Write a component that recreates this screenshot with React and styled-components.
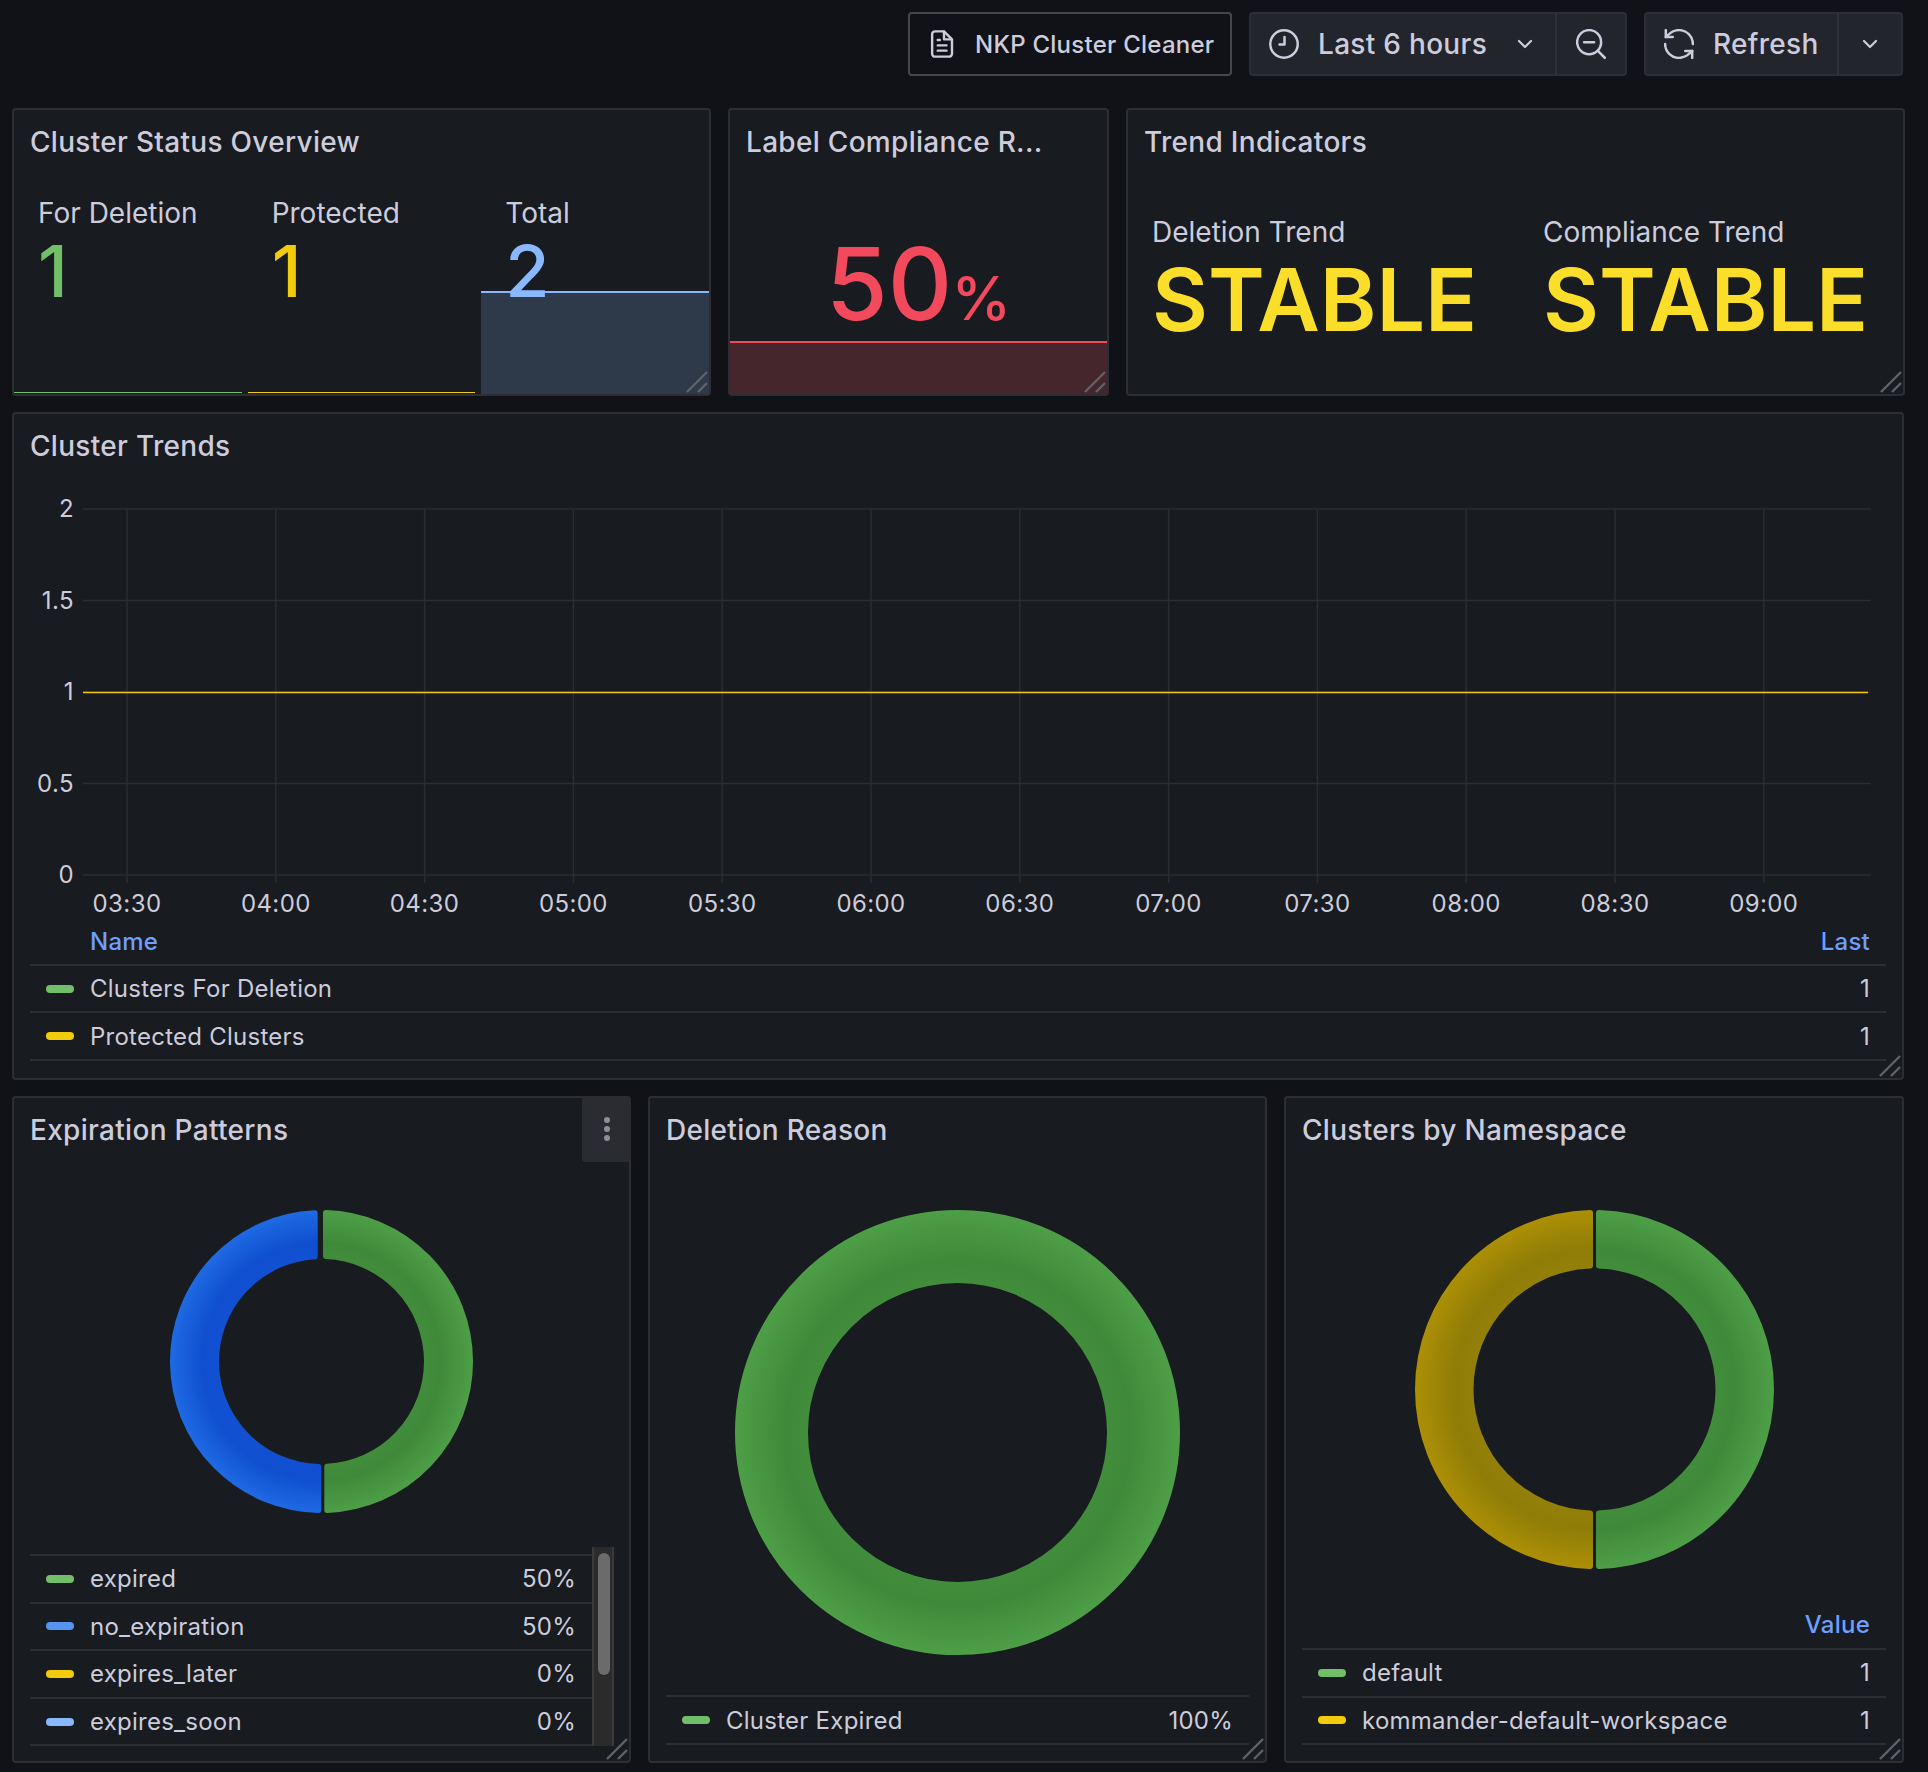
import React from "react";
import styled, { createGlobalStyle } from "styled-components";

const GlobalStyle = createGlobalStyle`
  html, body { margin: 0; padding: 0; background: #111217; }
  body { font-family: Inter, "Liberation Sans", sans-serif; color: #ccccdc; }
  * { box-sizing: border-box; }
`;

const Page = styled.div`
  width: 1928px;
  height: 1772px;
  padding: 12px 0 0 12px;
  overflow: hidden;
  background: #111217;
`;
const Toolbar = styled.header`
  display: flex;
  justify-content: flex-end;
  gap: 17px;
  height: 64px;
  margin-bottom: 32px;
  padding-right: 25px;
`;
const OutlineButton = styled.div`
  display: flex;
  align-items: center;
  width: 324px;
  gap: 17px;
  padding-left: 16px;
  border: 2px solid #45474d;
  border-radius: 4px;
  font-size: 24px;
  font-weight: 500;
  letter-spacing: 0.25px;
  color: #ccccdc;
`;
const ButtonGroup = styled.div`
  display: flex;
  align-items: stretch;
  height: 64px;
  background: #22252b;
  border: 2px solid #2c2e33;
  border-radius: 4px;
  font-size: 28px;
  font-weight: 500;
  letter-spacing: 0.3px;
`;
const GroupPart = styled.div`
  display: flex;
  align-items: center;
  justify-content: ${(p) => (p.$center ? "center" : "flex-start")};
  width: ${(p) => p.$w}px;
  padding-left: ${(p) => p.$pl || 0}px;
  gap: ${(p) => p.$gap || 0}px;
  & + & { border-left: 2px solid #2f3136; }
`;
const Chevron = styled.svg`
  margin-left: ${(p) => p.$ml || 0}px;
`;
const Rows = styled.div`
  display: grid;
  gap: 16px;
`;
const TopRow = styled.div`
  display: grid;
  grid-template-columns: 699px 381px 779px;
  gap: 17px;
  height: 288px;
`;
const BottomRow = styled.div`
  display: grid;
  grid-template-columns: 619px 619px 620px;
  gap: 17px;
  height: 667px;
`;
const Panel = styled.section`
  position: relative;
  display: flex;
  flex-direction: column;
  width: ${(p) => (p.$w ? p.$w + "px" : "auto")};
  height: ${(p) => (p.$h ? p.$h + "px" : "auto")};
  background: #181b1f;
  border: 2px solid #2c2e33;
  border-radius: 4px;
`;
const PanelTitle = styled.h2`
  flex: none;
  height: 62px;
  margin: 0;
  padding: 7px 16px 0;
  line-height: 50px;
  font-size: 28px;
  font-weight: 500;
  letter-spacing: 0.3px;
  color: #ccccdc;
  white-space: nowrap;
`;
const Resize = styled.svg`
  position: absolute;
  right: 1px;
  bottom: 1px;
`;
const Stats = styled.div`
  flex: 1;
  display: grid;
  grid-template-columns: repeat(3, 1fr);
  gap: 6px;
`;
const StatTile = styled.div`
  position: relative;
  padding: 23px 0 0 24px;
`;
const StatLabel = styled.div`
  font-size: 28px;
  line-height: 36px;
  color: #ccccdc;
`;
const StatValue = styled.div`
  position: relative;
  z-index: 1;
  font-size: 72px;
  font-weight: 500;
  line-height: 72px;
  margin-top: 4px;
  color: ${(p) => p.$color};
`;
const Spark = styled.div`
  position: absolute;
  left: 0;
  right: 0;
  bottom: 0;
  height: ${(p) => p.$h}px;
  background: ${(p) => p.$fill};
  border-top: ${(p) => p.$bw || 2}px solid ${(p) => p.$line};
`;
const GaugeBody = styled.div`
  position: relative;
  flex: 1;
  display: flex;
  justify-content: center;
  align-items: baseline;
  padding-top: 62px;
  color: #f2495c;
  font-weight: 500;
`;
const BigNumber = styled.span`
  font-size: 100px;
  line-height: 100px;
`;
const BigUnit = styled.span`
  font-size: 60px;
  line-height: 60px;
  margin-left: -1px;
`;
const TrendBody = styled.div`
  flex: 1;
  display: grid;
  grid-template-columns: 391px 1fr;
  padding: 42px 0 0 24px;
`;
const TrendItem = styled.div``;
const TrendLabel = styled.div`
  font-size: 28px;
  line-height: 36px;
`;
const TrendValue = styled.div`
  font-size: 86px;
  font-weight: 600;
  line-height: 88px;
  color: #fade2a;
  margin-top: 6px;
`;
const ChartSvg = styled.svg`
  display: block;
  flex: none;
  margin-top: 3px;
`;
const Axis = styled.text`
  font-family: Inter, "Liberation Sans", sans-serif;
  font-size: 24px;
  letter-spacing: 0.4px;
  fill: #ccccdc;
`;
const Legend = styled.div`
  margin: 0 16px;
  font-size: 24px;
  letter-spacing: 0.25px;
`;
const LegendRow = styled.div`
  display: flex;
  align-items: center;
  height: ${(p) => p.$h || 47.4}px;
  padding: 0 16px 0 16px;
  border-bottom: 2px solid #2c2e33;
`;
const HeaderRow = styled(LegendRow)`
  color: #6e9fff;
  font-weight: 500;
  padding-left: 60px;
  padding-bottom: 3px;
`;
const TopRule = styled.div`
  height: 2px;
  background: #2c2e33;
`;
const BottomSpacer = styled.div`
  flex: none;
  height: 16px;
`;
const Swatch = styled.span`
  flex: none;
  width: 28px;
  height: 8px;
  border-radius: 4px;
  background: ${(p) => p.$color};
  margin-right: 16px;
`;
const RowName = styled.span`
  flex: 1;
  white-space: nowrap;
`;
const DonutArea = styled.div`
  flex: 1;
  min-height: 0;
  display: flex;
  align-items: center;
  justify-content: center;
  padding-top: ${(p) => p.$top}px;
`;
const LegendScroll = styled.div`
  flex: none;
  display: flex;
  height: 199px;
  margin: 0 0 15px 16px;
  width: 584px;
  overflow: hidden;
  font-size: 24px;
  letter-spacing: 0.25px;
`;
const LegendList = styled.div`
  flex: 1;
  padding-top: 7px;
`;
const ScrollTrack = styled.div`
  flex: none;
  width: 22px;
  height: 199px;
  padding: 6px 4px 0 4px;
  background: #2b2b2b;
  border-left: 2px solid #3a3a3a;
  border-right: 2px solid #3a3a3a;
`;
const ScrollThumb = styled.div`
  width: 12px;
  height: 122px;
  border-radius: 6px;
  background: #6b6b6b;
`;
const MenuButton = styled.div`
  position: absolute;
  top: -2px;
  right: -2px;
  width: 49px;
  height: 66px;
  display: flex;
  flex-direction: column;
  align-items: center;
  justify-content: center;
  gap: 3.4px;
  background: #2a2c31;
  border-radius: 4px;
`;
const Dot = styled.i`
  width: 6px;
  height: 6px;
  border-radius: 50%;
  background: #8e8f96;
`;
const ListRow = styled(LegendRow)`
  height: 47.6px;
`;
const IconSvg = styled.svg`
  flex: none;
  display: block;
  fill: none;
  stroke: #ccccdc;
  stroke-width: ${(p) => p.$sw || 2};
  stroke-linecap: round;
  stroke-linejoin: round;
`;

const FileIcon = () => (
  <IconSvg $sw={1.8} width="32" height="32" viewBox="0 0 24 24">
    <path d="M7 2.5h6.5l6 6V19.3a2.2 2.2 0 0 1-2.2 2.2H6.8a2.2 2.2 0 0 1-2.2-2.2V4.7A2.2 2.2 0 0 1 6.8 2.5Z" />
    <path d="M13.5 2.8V8.5h5.6M8.8 9h1.6M8.8 13h6.6M8.8 17h6.6" />
  </IconSvg>
);
const ClockIcon = () => (
  <IconSvg width="30" height="30" viewBox="0 0 24 24">
    <circle cx="12" cy="12" r="11" />
    <path d="M12.4 6.4v6H8.4" />
  </IconSvg>
);
const ZoomIcon = () => (
  <IconSvg width="30" height="30" viewBox="0 0 24 24">
    <circle cx="10.5" cy="10.5" r="9.6" />
    <path d="M6.5 10.5h8M17.5 17.5 23 23" />
  </IconSvg>
);
const SyncIcon = () => (
  <IconSvg $sw={1.8} width="30" height="30" viewBox="1.2 1.2 21.6 21.6">
    <path d="M22 12A10 10 0 0 0 12 2 10.8 10.8 0 0 0 4.6 5L2.5 7" />
    <path d="M2.5 2v5h5" />
    <path d="M2 12a10 10 0 0 0 10 10 10.8 10.8 0 0 0 7.4-3l2.1-2" />
    <path d="M16.5 17h5v5" />
  </IconSvg>
);
const Down = ({ ml }) => (
  <Chevron $ml={ml} width="16" height="10" viewBox="0 0 16 10" fill="none">
    <path d="M2 2l6 6 6-6" stroke="#ccccdc" strokeWidth="2.2" strokeLinecap="round" strokeLinejoin="round" />
  </Chevron>
);
const Grip = () => (
  <Resize width="22" height="22" viewBox="0 0 22 22">
    <path d="M1 21 21 1M12 21l9-9" stroke="#606268" strokeWidth="2.4" fill="none" />
  </Resize>
);

const TIMES = ["03:30","04:00","04:30","05:00","05:30","06:00","06:30","07:00","07:30","08:00","08:30","09:00"];
const YS = [["2",510],["1.5",601.5],["1",693],["0.5",784.5],["0",876]];

const TrendChart = () => (
  <ChartSvg width="1888" height="442" viewBox="14 480 1888 442">
    {YS.map(([l, y]) => (
      <g key={l}>
        <line x1="83" x2="1871" y1={y} y2={y} stroke="#2a2d31" strokeWidth="1.5" />
        <Axis x="74" y={y + 8} textAnchor="end">{l}</Axis>
      </g>
    ))}
    {TIMES.map((t, i) => {
      const x = 127 + i * 148.8;
      return (
        <g key={t}>
          <line x1={x} x2={x} y1="510" y2="884" stroke="#2a2d31" strokeWidth="1.5" />
          <Axis x={x} y="913" textAnchor="middle">{t}</Axis>
        </g>
      );
    })}
    <line x1="83" x2="1868" y1="693.5" y2="693.5" stroke="#f2cc0c" strokeWidth="1.6" />
  </ChartSvg>
);

const GRADS = {
  green: ["#418d3c", "#3f8a3a", "#4e9e47"],
  blue: ["#1150d2", "#0f4fd0", "#1f6ae3"],
  yellow: ["#948008", "#8f7d08", "#ac8f05"],
};

const sector = (cx, cy, R, r, dt, db, side) => {
  const inset = 3;
  const oR = R - inset;
  const iR = r + inset;
  const a = dt + side * inset;
  const b = db + side * inset;
  const sw = side > 0 ? 1 : 0;
  const y = (rad, d) => Math.sqrt(rad * rad - d * d);
  return [
    `M${cx + a} ${cy - y(oR, a)}`,
    `A${oR} ${oR} 0 0 ${sw} ${cx + b} ${cy + y(oR, b)}`,
    `L${cx + b} ${cy + y(iR, b)}`,
    `A${iR} ${iR} 0 0 ${1 - sw} ${cx + a} ${cy - y(iR, a)}`,
    "Z",
  ].join(" ");
};

const Donut = ({ id, R, r, segments, full }) => {
  const size = R * 2 + 4;
  const c = size / 2;
  return (
    <svg width={size} height={size} viewBox={`0 0 ${size} ${size}`}>
      <defs>
        {Object.entries(GRADS).map(([k, g]) => (
          <radialGradient key={k} id={`${id}-${k}`} gradientUnits="userSpaceOnUse" cx={c} cy={c} r={R}>
            <stop offset={r / R} stopColor={g[0]} />
            <stop offset={(r / R) * 1.16} stopColor={g[1]} />
            <stop offset="1" stopColor={g[2]} />
          </radialGradient>
        ))}
      </defs>
      {full ? (
        <circle cx={c} cy={c} r={(R + r) / 2} fill="none" stroke={`url(#${id}-${full})`} strokeWidth={R - r} />
      ) : (
        segments.map((s) => {
          const u = `url(#${id}-${s.color})`;
          return (
            <path key={s.color} d={sector(c, c, R, r, s.dt, s.db, s.side)} fill={u} stroke={u} strokeWidth="6" strokeLinejoin="round" />
          );
        })
      )}
    </svg>
  );
};

const Row = ({ color, name, value, Comp = LegendRow }) => (
  <Comp>
    <Swatch $color={color} />
    <RowName>{name}</RowName>
    <span>{value}</span>
  </Comp>
);

export default function App() {
  return (
    <Page>
      <GlobalStyle />
      <Toolbar>
        <OutlineButton>
          <FileIcon />
          NKP Cluster Cleaner
        </OutlineButton>
        <ButtonGroup>
          <GroupPart $w={304} $pl={18} $gap={19}>
            <ClockIcon />
            Last 6 hours
            <Down ml={11} />
          </GroupPart>
          <GroupPart $w={70} $center>
            <ZoomIcon />
          </GroupPart>
        </ButtonGroup>
        <ButtonGroup>
          <GroupPart $w={191} $pl={18} $gap={19}>
            <SyncIcon />
            Refresh
          </GroupPart>
          <GroupPart $w={64} $center>
            <Down />
          </GroupPart>
        </ButtonGroup>
      </Toolbar>

      <Rows>
        <TopRow>
          <Panel>
            <PanelTitle>Cluster Status Overview</PanelTitle>
            <Stats>
              <StatTile>
                <StatLabel>For Deletion</StatLabel>
                <StatValue $color="#73bf69">1</StatValue>
                <Spark $h={2} $bw={1.5} $fill="transparent" $line="#73bf69" />
              </StatTile>
              <StatTile>
                <StatLabel>Protected</StatLabel>
                <StatValue $color="#f2cc0c">1</StatValue>
                <Spark $h={2} $bw={1.5} $fill="transparent" $line="#f2cc0c" />
              </StatTile>
              <StatTile>
                <StatLabel>Total</StatLabel>
                <StatValue $color="#8ab8ff">2</StatValue>
                <Spark $h={103} $fill="#2e394a" $line="#8ab8ff" />
              </StatTile>
            </Stats>
            <Grip />
          </Panel>
          <Panel>
            <PanelTitle>Label Compliance R...</PanelTitle>
            <GaugeBody>
              <BigNumber>50</BigNumber>
              <BigUnit>%</BigUnit>
              <Spark $h={53} $fill="#45262d" $line="#f2495c" />
            </GaugeBody>
            <Grip />
          </Panel>
          <Panel>
            <PanelTitle>Trend Indicators</PanelTitle>
            <TrendBody>
              <TrendItem>
                <TrendLabel>Deletion Trend</TrendLabel>
                <TrendValue>STABLE</TrendValue>
              </TrendItem>
              <TrendItem>
                <TrendLabel>Compliance Trend</TrendLabel>
                <TrendValue>STABLE</TrendValue>
              </TrendItem>
            </TrendBody>
            <Grip />
          </Panel>
        </TopRow>

        <Panel $w={1892} $h={668}>
          <PanelTitle>Cluster Trends</PanelTitle>
          <TrendChart />
          <Legend>
            <HeaderRow $h={45}>
              <RowName>Name</RowName>
              <span>Last</span>
            </HeaderRow>
            <Row color="#73bf69" name="Clusters For Deletion" value="1" />
            <Row color="#f2cc0c" name="Protected Clusters" value="1" />
          </Legend>
          <Grip />
        </Panel>

        <BottomRow>
          <Panel>
            <PanelTitle>Expiration Patterns</PanelTitle>
            <MenuButton>
              <Dot />
              <Dot />
              <Dot />
            </MenuButton>
            <DonutArea $top={15}>
              <Donut
                id="exp"
                R={151.5}
                r={102.5}
                segments={[
                  { color: "green", side: 1, dt: 1.5, db: 2.8 },
                  { color: "blue", side: -1, dt: -3.8, db: -0.2 },
                ]}
              />
            </DonutArea>
            <LegendScroll>
              <LegendList>
                <TopRule />
                <Row Comp={ListRow} color="#73bf69" name="expired" value="50%" />
                <Row Comp={ListRow} color="#5794f2" name="no_expiration" value="50%" />
                <Row Comp={ListRow} color="#f2cc0c" name="expires_later" value="0%" />
                <Row Comp={ListRow} color="#8ab8ff" name="expires_soon" value="0%" />
              </LegendList>
              <ScrollTrack>
                <ScrollThumb />
              </ScrollTrack>
            </LegendScroll>
            <Grip />
          </Panel>
          <Panel>
            <PanelTitle>Deletion Reason</PanelTitle>
            <DonutArea $top={9}>
              <Donut id="del" R={222.5} r={149.5} full="green" />
            </DonutArea>
            <Legend>
              <TopRule />
              <Row Comp={ListRow} color="#73bf69" name="Cluster Expired" value="100%" />
            </Legend>
            <BottomSpacer />
            <Grip />
          </Panel>
          <Panel>
            <PanelTitle>Clusters by Namespace</PanelTitle>
            <DonutArea $top={15}>
              <Donut
                id="ns"
                R={179.5}
                r={121}
                segments={[
                  { color: "green", side: 1, dt: 1.5, db: 1.5 },
                  { color: "yellow", side: -1, dt: -1.5, db: -1.5 },
                ]}
              />
            </DonutArea>
            <Legend>
              <HeaderRow $h={47}>
                <RowName />
                <span>Value</span>
              </HeaderRow>
              <Row color="#73bf69" name="default" value="1" />
              <Row color="#f2cc0c" name="kommander-default-workspace" value="1" />
            </Legend>
            <BottomSpacer />
            <Grip />
          </Panel>
        </BottomRow>
      </Rows>
    </Page>
  );
}
